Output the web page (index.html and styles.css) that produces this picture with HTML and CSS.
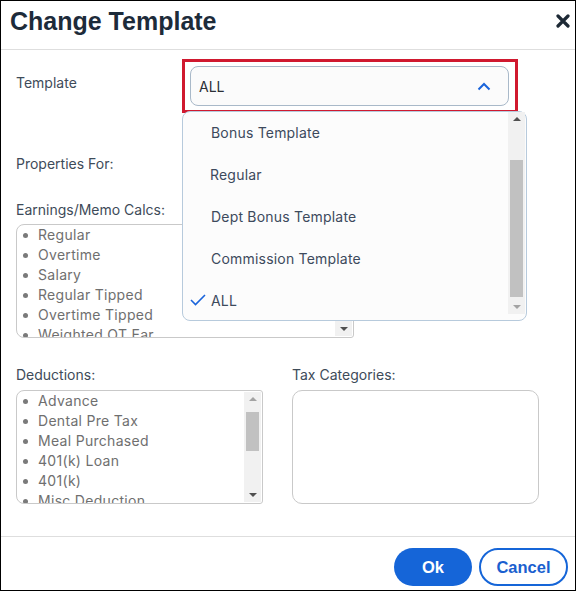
FILE: index.html
```html
<!DOCTYPE html>
<html lang="en">
  <head>
    <meta charset="UTF-8" />
    <meta name="viewport" content="width=device-width, initial-scale=1.0" />
    <title>Change Template</title>
    <link rel="stylesheet" href="styles.css">
  </head>
  <body>
    <div class="dialog">
      <header class="dialog-head">
        <h1>Change Template</h1>
        <a href="javascript:void(0)" class="close-btn">
          <svg width="14" height="14" viewBox="0 0 14 14">
            <path d="M2 2 L12 12 M12 2 L2 12" stroke="#1d2935" stroke-width="3.2" stroke-linecap="round" />
          </svg>
        </a>
      </header>

      <div class="dialog-body">
        <div class="template-row">
          <label class="field-label">Template</label>
          <div class="highlight">
            <div class="select">
              <span>ALL</span>
              <svg width="14" height="9" viewBox="0 0 14 9">
                <path d="M1.5 7.5 L7 2 L12.5 7.5" fill="none" stroke="#1a64db" stroke-width="2" />
              </svg>
            </div>
            <!-- opened dropdown -->
            <div class="dropdown">
              <ul class="options">
                <li><span class="check"></span>Bonus Template</li>
                <li><span class="check"></span>Regular</li>
                <li><span class="check"></span>Dept Bonus Template</li>
                <li><span class="check"></span>Commission Template</li>
                <li class="selected">
                  <span class="check">
                    <svg width="16" height="12" viewBox="0 0 16 12">
                      <path d="M1 6 L5.5 10.5 L15 1" fill="none" stroke="#1a64db" stroke-width="1.6" />
                    </svg>
                  </span>ALL
                </li>
              </ul>
              <div class="scrollbar">
                <span class="arrow up"></span>
                <div class="track"><div class="thumb thumb-drop"></div></div>
                <span class="arrow down light"></span>
              </div>
            </div>
          </div>
        </div>

        <div class="field-label props">Properties For:</div>

        <div class="field-label gap">Earnings/Memo Calcs:</div>
        <div class="listbox earnings">
          <ul class="items">
            <li>Regular</li>
            <li>Overtime</li>
            <li>Salary</li>
            <li>Regular Tipped</li>
            <li>Overtime Tipped</li>
            <li>Weighted OT Ear</li>
          </ul>
          <div class="scrollbar">
            <span class="arrow up"></span>
            <div class="track"></div>
            <span class="arrow down"></span>
          </div>
        </div>

        <div class="two-cols">
          <div>
            <div class="field-label">Deductions:</div>
            <div class="listbox deductions">
              <ul class="items">
                <li>Advance</li>
                <li>Dental Pre Tax</li>
                <li>Meal Purchased</li>
                <li>401(k) Loan</li>
                <li>401(k)</li>
                <li>Misc Deduction</li>
              </ul>
              <div class="scrollbar">
                <span class="arrow up light"></span>
                <div class="track"><div class="thumb thumb-ded"></div></div>
                <span class="arrow down"></span>
              </div>
            </div>
          </div>
          <div>
            <div class="field-label">Tax Categories:</div>
            <div class="taxbox"></div>
          </div>
        </div>
      </div>

      <footer class="dialog-foot">
        <a href="javascript:void(0)" class="btn btn-ok">Ok</a>
        <a href="javascript:void(0)" class="btn btn-cancel">Cancel</a>
      </footer>
    </div>
  </body>
</html>
```

FILE: styles.css
```css
body {
  margin: 0;
  font-family: Inter, "Noto Sans", sans-serif;
}
ul {
  list-style: none;
  margin: 0;
  padding: 0;
}
a {
  text-decoration: none;
}
.dialog {
  width: 576px;
  height: 591px;
  box-sizing: border-box;
  border: 1px solid #000;
  background: #fff;
  display: flex;
  flex-direction: column;
}

/* header */
.dialog-head {
  height: 48px;
  border-bottom: 1px solid #dedede;
  display: flex;
  justify-content: space-between;
  align-items: flex-start;
}
.dialog-head h1 {
  margin: 0;
  padding: 6px 0 0 9px;
  font-family: "Liberation Sans", Arial, sans-serif;
  font-size: 25px;
  line-height: 28px;
  font-weight: bold;
  color: #1d2b3a;
}
.close-btn {
  display: block;
  margin: 13px 5px 0 0;
  width: 14px;
  height: 14px;
}
.close-btn svg {
  display: block;
}

/* body */
.dialog-body {
  padding: 9px 16px 0 15px;
}
.field-label {
  font-size: 14px;
  line-height: 18px;
  color: #3e4b59;
}
.template-row {
  display: flex;
}
.template-row .field-label {
  width: 166px;
  padding-top: 15px;
}
.highlight {
  position: relative;
  width: 336px;
  height: 54px;
  box-sizing: border-box;
  border: 3px solid #d0192f;
  padding: 4px 6px 4px 5px;
  z-index: 2;
}
.select {
  height: 40px;
  box-sizing: border-box;
  border: 1px solid #a9b9c9;
  border-radius: 8px;
  background: #fbfbfb;
  display: flex;
  align-items: center;
  justify-content: space-between;
  padding: 0 17px 0 8px;
  font-size: 14px;
  color: #2b2f36;
}
.select svg {
  display: block;
}
.dropdown {
  position: absolute;
  left: -3px;
  top: 49px;
  width: 345px;
  height: 210px;
  box-sizing: border-box;
  border: 1px solid #b7cadc;
  border-radius: 8px;
  background: #fcfcfc;
  display: flex;
  z-index: -1;
}
.options {
  flex: 1;
}
.options li {
  height: 42px;
  display: flex;
  align-items: center;
  padding-left: 7px;
  font-size: 14px;
  letter-spacing: 0.2px;
  color: #3d4a5c;
}
.options li:first-child {
  height: 41px;
}
.options li:nth-child(2) {
  margin-left: -1px;
}
.check {
  width: 21px;
  display: flex;
  align-items: center;
}
.check svg {
  display: block;
}

/* custom scrollbars */
.scrollbar {
  width: 17px;
  display: flex;
  flex-direction: column;
  align-items: center;
  background: #f1f1f1;
}
.dropdown .scrollbar {
  margin: 0 1px 6px 0;
}
.scrollbar .track {
  flex: 1;
  width: 13px;
  position: relative;
}
.thumb {
  position: absolute;
  left: 0;
  right: 0;
  background: #c1c1c1;
}
.thumb-drop {
  top: 34px;
  bottom: 3px;
}
.thumb-ded {
  top: 6px;
  bottom: 37px;
}
.arrow {
  width: 0;
  height: 0;
  border-left: 4px solid transparent;
  border-right: 4px solid transparent;
  margin: 5px 0;
}
.arrow.up {
  border-bottom: 4px solid #505050;
}
.arrow.down {
  border-top: 4px solid #505050;
}
.arrow.up.light {
  border-bottom-color: #a3a3a3;
}
.arrow.down.light {
  border-top-color: #a3a3a3;
}

/* list boxes */
.props {
  margin-top: 42px;
}
.gap {
  margin-top: 28px;
}
.listbox {
  margin-top: 6px;
  height: 114px;
  box-sizing: border-box;
  border: 1px solid #c9c9c9;
  border-radius: 8px 3px 3px 8px;
  display: flex;
  overflow: hidden;
}
.listbox.earnings {
  width: 338px;
  margin-top: 5px;
}
.listbox.deductions {
  width: 247px;
}
.listbox .scrollbar {
  margin: 1px 1px 1px 0;
}
.items {
  flex: 1;
  padding: 0 0 0 6px;
  overflow: hidden;
}
.items li {
  height: 20px;
  line-height: 20px;
  font-size: 14px;
  letter-spacing: 0.3px;
  color: #6f6f6f;
  white-space: nowrap;
}
.items li::before {
  content: "";
  display: inline-block;
  width: 5px;
  height: 5px;
  border-radius: 50%;
  background: #7a7a7a;
  margin: 0 10px 2px 0;
  vertical-align: middle;
}
.two-cols {
  margin-top: 28px;
  display: grid;
  grid-template-columns: 247px 247px;
  column-gap: 29px;
}
.taxbox {
  margin-top: 6px;
  height: 114px;
  box-sizing: border-box;
  border: 1px solid #c9c9c9;
  border-radius: 10px;
}

/* footer */
.dialog-foot {
  margin-top: auto;
  border-top: 1px solid #dedede;
  padding: 11px 7px 4px 0;
  display: flex;
  justify-content: flex-end;
  gap: 7px;
}
.btn {
  height: 38px;
  box-sizing: border-box;
  border-radius: 19px;
  display: flex;
  align-items: center;
  justify-content: center;
  font-family: "Liberation Sans", Arial, sans-serif;
  font-size: 16.5px;
  font-weight: bold;
}
.btn-ok {
  width: 78px;
  background: #1565d8;
  color: #fff;
}
.btn-cancel {
  width: 89px;
  border: 2px solid #1565d8;
  color: #1a5fcf;
  background: #fff;
}
```
